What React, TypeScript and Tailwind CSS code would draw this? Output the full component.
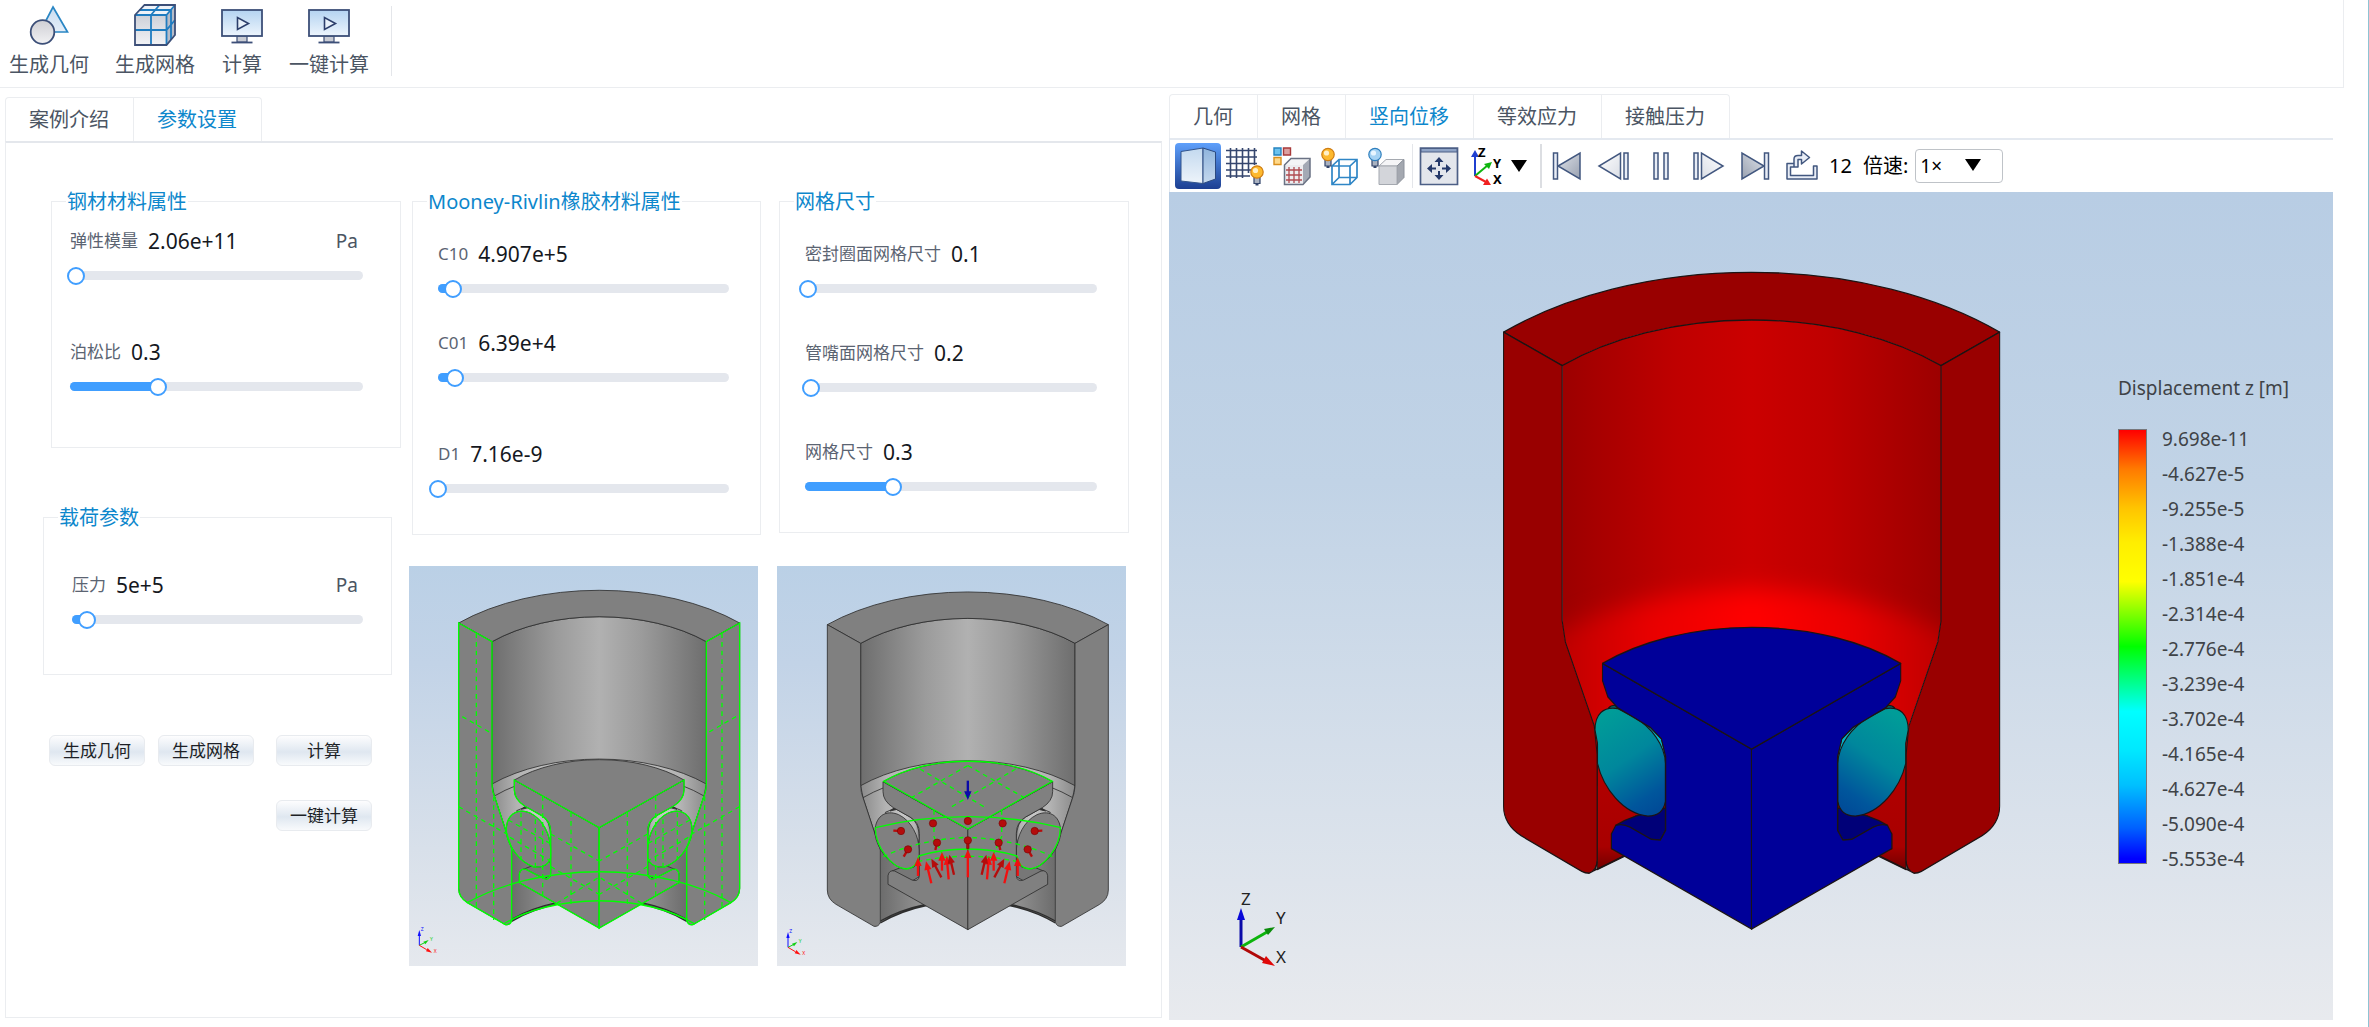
import { useId, useState } from "react";
import type { ReactNode } from "react";

const NAVY = "#3c4f78";
const GREEN = "#00ff00";

/* ---------- ribbon icons ---------- */

function ShapesIcon() {
  return (
    <svg width="42" height="42" viewBox="0 0 42 42" aria-hidden="true">
      <defs>
        <linearGradient id="shTri" x1="0" y1="0" x2="0" y2="1">
          <stop offset="0" stopColor="#c9dcf0" />
          <stop offset="1" stopColor="#e4eef9" />
        </linearGradient>
        <linearGradient id="shCir" x1="0" y1="0" x2="0" y2="1">
          <stop offset="0" stopColor="#cfcfd4" />
          <stop offset="1" stopColor="#f1f1f3" />
        </linearGradient>
      </defs>
      <path d="M25 3L39.500 28H12Z" fill="url(#shTri)" stroke="#2a86c4" strokeWidth="1.700" />
      <circle cx="14.500" cy="28" r="11.800" fill="url(#shCir)" stroke={NAVY} strokeWidth="1.800" />
    </svg>
  );
}

function MeshCubeIcon() {
  return (
    <svg width="42" height="42" viewBox="0 0 42 42" aria-hidden="true">
      <defs>
        <linearGradient id="mcF" x1="0" y1="0" x2="0" y2="1">
          <stop offset="0" stopColor="#cdd0d8" />
          <stop offset="1" stopColor="#f2f3f6" />
        </linearGradient>
      </defs>
      <path d="M1 11L10.500 1H41L32.500 11Z" fill="#eef2f8" />
      <path d="M32.500 11L41 1V31L32.500 41Z" fill="#b7bcc8" />
      <path d="M1 11H32.500V41H1Z" fill="url(#mcF)" />
      <path d="M17 41V11L25.500 1M1 26H32.500L41 16M5.500 6H37V36M1 11H32.500M32.500 11V41M32.500 11L41 1" fill="none" stroke="#1f7cc0" strokeWidth="1.800" />
      <path d="M1 11L10.500 1H41V31L32.500 41H1Z" fill="none" stroke={NAVY} strokeWidth="1.800" />
    </svg>
  );
}

function MonitorIcon() {
  const id = useId();
  return (
    <svg width="42" height="42" viewBox="0 0 42 42" aria-hidden="true">
      <defs>
        <linearGradient id={id} x1="0" y1="0" x2="0" y2="1">
          <stop offset="0" stopColor="#b4d3f1" />
          <stop offset="1" stopColor="#edf5fd" />
        </linearGradient>
      </defs>
      <path d="M16 32H26V38H16Z" fill="#c9ccd4" stroke={NAVY} strokeWidth="1.200" />
      <path d="M10.500 38.500H31.500" stroke={NAVY} strokeWidth="1.800" />
      <rect x="1" y="6" width="40" height="26" fill={`url(#${id})`} stroke={NAVY} strokeWidth="1.800" />
      <path d="M16.500 13.500V25.500L27.500 19.500Z" fill="#e8f1fa" stroke="#2c3e6b" strokeWidth="1.600" />
    </svg>
  );
}

/* ---------- viewer toolbar icons ---------- */

function Bulb({ x, y, on }: { x: number; y: number; on: boolean }) {
  return (
    <g transform={`translate(${x} ${y})`}>
      <path d="M-3 5H3V11.500H-3Z" fill="#aab2c0" stroke="#33456b" strokeWidth="1.200" />
      <path d="M-1.500 11.500H1.500V13.500H-1.500Z" fill="#33456b" />
      <circle r="6.200" fill={on ? "#fdb92e" : "#a5d2f4"} stroke={on ? "#cf7d13" : "#2f7fbd"} strokeWidth="1.200" />
      <circle cx="-1.500" cy="-1.500" r="2.600" fill={on ? "#fff0c8" : "#e8f5ff"} />
    </g>
  );
}

function SolidViewIcon() {
  return (
    <svg width="40" height="40" viewBox="0 0 40 40" aria-hidden="true">
      <defs>
        <linearGradient id="svL" x1="0" y1="0" x2="0" y2="1">
          <stop offset="0" stopColor="#c3d9ef" />
          <stop offset="1" stopColor="#eef4fa" />
        </linearGradient>
        <linearGradient id="svR" x1="0" y1="0" x2="0" y2="1">
          <stop offset="0" stopColor="#8fb4dc" />
          <stop offset="1" stopColor="#c5d9ee" />
        </linearGradient>
      </defs>
      <path d="M3 5.500L25 2V37.500L3 35Z" fill="url(#svL)" stroke="#33558c" />
      <path d="M25 2L37.500 6V33L25 37.500Z" fill="url(#svR)" stroke="#2c4a80" />
    </svg>
  );
}

function GridBulbIcon() {
  return (
    <svg width="40" height="40" viewBox="0 0 40 40" aria-hidden="true">
      <path d="M5.500 2V32M11.500 2V32M17.500 2V32M23.500 2V27M29.500 2V19M1 4.500H32M1 11H32M1 17.500H32M1 24H26M1 30H25" fill="none" stroke="#35466e" strokeWidth="1.600" />
      <Bulb x={32} y={26} on />
    </svg>
  );
}

function SelectionMeshIcon() {
  return (
    <svg width="40" height="40" viewBox="0 0 40 40" aria-hidden="true">
      <path d="M2 2H9V9H2Z" fill="#6cc2ee" stroke="#2484c0" strokeWidth="1.400" />
      <path d="M11.500 2H18.500V9H11.500Z" fill="#dca0a0" stroke="#a83a3a" strokeWidth="1.400" />
      <path d="M2 11.500H9V18.500H2Z" fill="#ffd98a" stroke="#d98f1e" strokeWidth="1.400" />
      <path d="M12.500 19L19 12.500H38L31 19Z" fill="#f3f4f6" />
      <path d="M31 19L38 12.500V31L31 38.500Z" fill="#a3a9b5" />
      <path d="M12.500 19H31V38.500H12.500Z" fill="#ececef" />
      <path d="M12.500 38.500V19L19 12.500H38V31L31 38.500Z" fill="none" stroke="#6a7284" strokeWidth="1.500" />
      <path d="M14 24H30M14 29H30M14 34H30M17 21V37M22 21V37M27 21V37" stroke="#b04a50" strokeWidth="1.300" />
    </svg>
  );
}

function WireBulbIcon() {
  return (
    <svg width="40" height="40" viewBox="0 0 40 40" aria-hidden="true">
      <path d="M13 20L20 13.500H38V31.500L31 38.500H13ZM13 20H31V38.500M31 20L38 13.500M20 13.500V31.500M20 31.500H38M20 31.500L13 38.500" fill="none" stroke="#2f86c6" strokeWidth="1.700" />
      <Bulb x={9} y={8.500} on />
    </svg>
  );
}

function TransparentBulbIcon() {
  return (
    <svg width="40" height="40" viewBox="0 0 40 40" aria-hidden="true">
      <path d="M13 20L20 13.500H38L31 20Z" fill="#f5f5f7" stroke="#a5a9b0" />
      <path d="M31 20L38 13.500V31.500L31 38.500Z" fill="#a4a8b0" stroke="#8d929c" />
      <path d="M13 20H31V38.500H13Z" fill="#d3d5da" stroke="#a5a9b0" />
      <Bulb x={9} y={8.500} on={false} />
    </svg>
  );
}

function FitIcon() {
  return (
    <svg width="40" height="40" viewBox="0 0 40 40" aria-hidden="true">
      <path d="M1.500 2H38.500V38.500H1.500Z" fill="#e3e6ec" stroke="#4c5f86" strokeWidth="1.700" />
      <path d="M2 2.500H38V6H2Z" fill="#8ea3c6" stroke="#4c5f86" />
      <path d="M20 11L24.500 16H21V20H19V16H15.500ZM20 34L24.500 29H21V25H19V29H15.500ZM8 22.500L13 18V21.500H17V23.500H13V27ZM32 22.500L27 18V21.500H23V23.500H27V27Z" fill="#25396a" />
    </svg>
  );
}

function AxesIcon() {
  return (
    <svg width="34" height="46" viewBox="0 -3 34 46" aria-hidden="true" fontFamily="Noto Sans, sans-serif" fontSize="13" fontWeight="700">
      <path d="M4 30V9" stroke="#1f3fd0" strokeWidth="2" />
      <path d="M4 4L8 11H0Z" fill="#1f3fd0" />
      <path d="M4 30L17 19" stroke="#0eb50e" strokeWidth="2" />
      <path d="M21 16L18 23L13 18Z" fill="#0eb50e" />
      <path d="M4 30L15 36" stroke="#f02020" strokeWidth="2" />
      <path d="M20 39L12 39L16 32.500Z" fill="#f02020" />
      <text x="7" y="11">Z</text>
      <text x="22" y="22">Y</text>
      <text x="22" y="38">X</text>
    </svg>
  );
}

function Caret() {
  return (
    <svg width="16" height="12" viewBox="0 0 16 12" aria-hidden="true">
      <path d="M0 0H16L8 12Z" fill="#000" />
    </svg>
  );
}

type MediaKind = "first" | "prev" | "pause" | "next" | "last" | "export";

function MediaIcon({ kind }: { kind: MediaKind }) {
  const mirrored = kind === "next" || kind === "last";
  return (
    <svg width="36" height="36" viewBox="0 0 36 36" aria-hidden="true">
      <defs>
        <linearGradient id={`md-${kind}`} x1="0" y1="0" x2="1" y2="1">
          <stop offset="0" stopColor={kind === "prev" || kind === "next" ? "#ffffff" : "#dfe3ea"} />
          <stop offset="1" stopColor={kind === "prev" || kind === "next" ? "#d9dde5" : "#99a1b0"} />
        </linearGradient>
      </defs>
      <g transform={mirrored ? "translate(36 0) scale(-1 1)" : undefined} stroke="#42577f" strokeWidth="1.500">
        {(kind === "first" || kind === "last") && (
          <>
            <path d="M31 5V31L9 18Z" fill={`url(#md-${kind})`} />
            <path d="M4.500 5H8.500V31H4.500Z" fill="#e8edf6" />
          </>
        )}
        {(kind === "prev" || kind === "next") && (
          <>
            <path d="M24.500 5V31L3 18Z" fill={`url(#md-${kind})`} />
            <path d="M28 5H32V31H28Z" fill="#e8edf6" />
          </>
        )}
        {kind === "pause" && (
          <>
            <path d="M11 5H15V31H11Z" fill="#e8edf6" />
            <path d="M21 5H25V31H21Z" fill="#e8edf6" />
          </>
        )}
        {kind === "export" && (
          <path
            d="M10 15.500H3V31H33V18H29.500V27.500H6.500V19H10V11Q10 7.500 14 7.500H17.500V3L25.500 9.500L17.500 16V11.500H14V19H10"
            fill="#e8edf6"
            strokeLinejoin="round"
          />
        )}
      </g>
    </svg>
  );
}

/* ---------- 3D drawings ---------- */

function Triad() {
  return (
    <svg width="70" height="90" viewBox="0 0 70 90" role="img" aria-label="坐标轴" fontFamily="Noto Sans, sans-serif" fontSize="17" fill="#222">
      <path d="M8 60V28" stroke="#0a0aa8" strokeWidth="3" />
      <path d="M8 21L12 33H4Z" fill="#0808d8" />
      <path d="M8 60L34 45" stroke="#0cb40c" strokeWidth="3" />
      <path d="M42 40L35 48L31 42Z" fill="#0a8c0a" />
      <path d="M8 60L33 74" stroke="#b00808" strokeWidth="3" />
      <path d="M42 79L29 76L33 69Z" fill="#e00808" />
      <text x="8" y="18">Z</text>
      <text x="43" y="37">Y</text>
      <text x="43" y="76">X</text>
    </svg>
  );
}

function ResultHalf() {
  return (
    <g>
      <path d="M328 1130V1388L420 1352L368 1341V1308L436 1268L519 1250V1130Z" fill="url(#rmLow)" />
      <path d="M360 1026Q366 1020 378 1020L400 1036Z" fill="#006c70" />
      <path d="M440 1050L478 1070L508 1095L520 1135V1180Z" fill="#05b2c6" />
      <path d="M380 1289Q405 1276 436 1268L519 1250V1300L505 1322H480L420 1294Z" fill="#000078" />
      <path d="M66 184L230 259V830L239 878L320 1066L328 1130V1365Q328 1388 306 1396Q294 1396 285 1392L115 1312Q66 1286 66 1246Z" fill="#990000" />
      <path d="M322 1075C322 1040 345 1022 385 1027L430 1046C480 1068 518 1110 519 1150V1235Q512 1268 470 1268C400 1262 345 1205 329 1150V1105Z" fill="url(#rmRing)" />
      <path d="M343 926L761 1118V1521L368 1341V1308L380 1289Q400 1284 420 1293L480 1320L505 1322L520 1300V1135L508 1095L478 1070L385 1025L358 1001L343 965Z" fill="#000099" />
      <path d="M328 1370Q326 1386 318 1391L400 1358" fill="none" />
    </g>
  );
}

function ResultModel() {
  return (
    <svg className="h-auto w-full" viewBox="-9 0 560 700" role="img" aria-label="竖向位移云图">
      <defs>
        <linearGradient id="rmWall">
          <stop offset="0" stopColor="#9c0000" />
          <stop offset="0.3" stopColor="#bf0000" />
          <stop offset="0.5" stopColor="#cb0000" />
          <stop offset="0.7" stopColor="#bf0000" />
          <stop offset="1" stopColor="#9c0000" />
        </linearGradient>
        <linearGradient id="rmCone">
          <stop offset="0" stopColor="#b80000" />
          <stop offset="0.25" stopColor="#e80000" />
          <stop offset="0.5" stopColor="#ff0000" />
          <stop offset="0.75" stopColor="#e80000" />
          <stop offset="1" stopColor="#b80000" />
        </linearGradient>
        <linearGradient id="rmLow" x1="0" y1="0" x2="0" y2="1">
          <stop offset="0" stopColor="#b40000" />
          <stop offset="0.8" stopColor="#a80000" />
          <stop offset="1" stopColor="#700000" />
        </linearGradient>
        <linearGradient id="rmRing" x1="0.3" y1="0" x2="0.75" y2="1">
          <stop offset="0" stopColor="#009c98" />
          <stop offset="0.45" stopColor="#00879c" />
          <stop offset="0.85" stopColor="#00569c" />
          <stop offset="1" stopColor="#004c98" />
        </linearGradient>
        <filter id="rmSoft" x="-20%" y="-20%" width="140%" height="140%">
          <feGaussianBlur stdDeviation="26" />
        </filter>
        <clipPath id="rmClip">
          <path d="M230 259A750 349 0 0 1 1291 259V830L1281 878L1198 1070V1200H322V1070L239 878L230 830Z" />
        </clipPath>
      </defs>
      <g transform="scale(0.357143 0.446429)" stroke="#1c1414" strokeWidth="3" strokeLinejoin="round">
        <g clipPath="url(#rmClip)" stroke="none">
          <path d="M230 150H1291V1200H230Z" fill="url(#rmWall)" />
          <path d="M190 870A800 372 0 0 1 1331 870V1260H190Z" fill="url(#rmCone)" filter="url(#rmSoft)" />
        </g>
        <path d="M66 184A982 457 0 0 1 1455 184L1291 259A750 349 0 0 0 230 259Z" fill="#990000" />
        <ResultHalf />
        <g transform="translate(1521 0) scale(-1 1)">
          <ResultHalf />
        </g>
        <path d="M343 926A590 275 0 0 1 1178 926L760.500 1118Z" fill="#000099" />
      </g>
    </svg>
  );
}

const SECTION = "M176 189L276 245V672Q277 695 283 708L335 865V1082Q330 1096 316 1094L202 1028Q176 1012 176 985Z";
const PLUNGER = "M343 660L597.500 803V1104L358 968V942Q361 924 378 928L430 955Q450 962 452 942V815Q452 782 424 766L374 738Q343 718 343 690Z";
const RING = "M319 818C316 765 350 742 390 759C430 778 450 825 452 865V893Q444 925 402 921C360 908 325 860 319 818Z";

function GreyHalf() {
  return (
    <g>
      <path d="M335 865V1084A371 214 0 0 1 480 1030L520 1000V860Z" fill="url(#gmLow)" stroke="none" />
      <path d="M335 1078A371 214 0 0 1 470 1028M335 1084A371 214 0 0 1 480 1030" fill="none" strokeWidth="4" />
      <path d="M350 752L378 740L424 766Q452 782 452 830L440 880Z" fill="url(#gmCone)" />
      <path d="M364 748L390 742L378 738Z" fill="#333" />
      <path d="M370 928L400 916L452 905V945L430 958Z" fill="#777" />
      <path d={SECTION} fill="#808080" />
      <path d={RING} fill="#808080" />
      <path d={PLUNGER} fill="#808080" />
    </g>
  );
}

function GreyModel() {
  return (
    <g stroke="#2e2e2e" strokeWidth="2.500" strokeLinejoin="round">
      <defs>
        <linearGradient id="gmWall">
          <stop offset="0" stopColor="#6e6e6e" />
          <stop offset="0.3" stopColor="#9b9b9b" />
          <stop offset="0.5" stopColor="#b1b1b1" />
          <stop offset="0.7" stopColor="#9b9b9b" />
          <stop offset="1" stopColor="#6e6e6e" />
        </linearGradient>
        <linearGradient id="gmCone">
          <stop offset="0" stopColor="#8a8a8a" />
          <stop offset="0.12" stopColor="#b4b4b4" />
          <stop offset="0.5" stopColor="#c8c8c8" />
          <stop offset="0.88" stopColor="#b4b4b4" />
          <stop offset="1" stopColor="#8a8a8a" />
        </linearGradient>
        <linearGradient id="gmLow">
          <stop offset="0" stopColor="#6c6c6c" />
          <stop offset="1" stopColor="#a6a6a6" />
        </linearGradient>
      </defs>
      <path d="M276 245A455 256 0 0 1 919 245V672H276Z" fill="url(#gmWall)" />
      <path d="M276 672A455 256 0 0 1 919 672L912 708L875 820H320L283 708Z" fill="url(#gmCone)" />
      <path d="M283 708A440 250 0 0 1 912 708" fill="none" />
      <path d="M176 189A596 335 0 0 1 1019 189L919 245A455 256 0 0 0 276 245Z" fill="#808080" />
      <GreyHalf />
      <g transform="translate(1195 0) scale(-1 1)">
        <GreyHalf />
      </g>
      <path d="M343 660A359 207 0 0 1 852 660L597.500 803Z" fill="#808080" />
    </g>
  );
}

function GeometryHalfLines() {
  return (
    <g>
      <path d={SECTION} />
      <path d={RING} />
      <path d={PLUNGER} />
      <path
        d="M229 220V1045M281 710V1080M187 470L275 520M176 740L320 822M363 758V900M406 778V920M325 780L450 850M330 832L450 902M428 708V1008M513 757V1035M452 822L597 903M452 920L597 1003M470 1030L600 950"
        strokeDasharray="14 12"
      />
    </g>
  );
}

function MiniTriad({ x, y }: { x: number; y: number }) {
  return (
    <g transform={`translate(${x} ${y})`} strokeWidth="3" fontFamily="Noto Sans, sans-serif" fontSize="15">
      <path d="M0 0V-32" stroke="#1010ff" />
      <path d="M0 -46L5 -28H-5Z" fill="#1010ff" />
      <path d="M0 0L16 -8" stroke="#10d010" />
      <path d="M28 -16L18 -3L12 -11Z" fill="#10d010" />
      <path d="M0 0L22 13" stroke="#ff1010" />
      <path d="M38 22L20 18L25 8Z" fill="#ff1010" />
      <text x="4" y="-42" fill="#1010ff">Z</text>
      <text x="32" y="-14" fill="#10d010">Y</text>
      <text x="43" y="24" fill="#ff1010">X</text>
    </g>
  );
}

function ThumbSky() {
  return (
    <>
      <defs>
        <linearGradient id="thSky" x1="0" y1="0" x2="0" y2="1">
          <stop offset="0" stopColor="#bad0e6" />
          <stop offset="0.25" stopColor="#c2d3e7" />
          <stop offset="0.7" stopColor="#d8e0ea" />
          <stop offset="1" stopColor="#e6e9ee" />
        </linearGradient>
      </defs>
      <path d="M0 0H1100V1240H0Z" fill="url(#thSky)" />
    </>
  );
}

function GeometryThumb() {
  return (
    <svg className="h-auto w-full" viewBox="27 18 1047 1200" role="img" aria-label="几何示意图">
      <ThumbSky />
      <GreyModel />
      <g fill="none" stroke={GREEN} strokeWidth="4">
        <GeometryHalfLines />
        <g transform="translate(1195 0) scale(-1 1)">
          <GeometryHalfLines />
        </g>
        <path d="M202 1028A560 318 0 0 1 993 1028M310 1092A407 239 0 0 1 885 1092" />
      </g>
      <MiniTriad x={58} y={1156} />
    </svg>
  );
}

const PRESSURE_ARROWS: [number, number, number, number][] = [
  [444, 948, 444, 892],
  [484, 970, 468, 904],
  [514, 952, 484, 896],
  [516, 932, 516, 876],
  [536, 958, 530, 888],
  [552, 944, 538, 884],
];
const PRESSURE_DOTS: [number, number, number, number][] = [
  [393, 813, 370, 812],
  [414, 868, 401, 890],
  [489, 790, 480, 790],
  [501, 848, 496, 870],
];

function PressureHalf() {
  return (
    <g stroke="#b40c0c" fill="#b40c0c" strokeWidth="7">
      {PRESSURE_DOTS.map(([cx, cy, x, y]) => (
        <g key={`${cx}-${cy}`}>
          <path d={`M${cx} ${cy}L${x} ${y}`} />
          <circle cx={cx} cy={cy} r="11" stroke="#7a0606" strokeWidth="2" />
        </g>
      ))}
      {PRESSURE_ARROWS.map(([x1, y1, x2, y2], i) => (
        <Arrow key={i} x1={x1} y1={y1} x2={x2} y2={y2} color={i % 3 === 2 ? "#b40c0c" : "#f01010"} />
      ))}
    </g>
  );
}

function Arrow({ x1, y1, x2, y2, color }: { x1: number; y1: number; x2: number; y2: number; color: string }) {
  const angle = (Math.atan2(y2 - y1, x2 - x1) * 180) / Math.PI;
  const length = Math.hypot(x2 - x1, y2 - y1);
  return (
    <g transform={`translate(${x1} ${y1}) rotate(${angle})`}>
      <path d={`M0 0H${length - 20}`} stroke={color} strokeWidth="7" />
      <path d={`M${length} 0L${length - 26} 11V-11Z`} fill={color} stroke="none" />
    </g>
  );
}

function LoadHalfLines() {
  return (
    <g>
      <path d="M316 803C316 860 365 925 408 927Q440 925 446 888" />
      <path
        d="M450 627L650 745M593 617L426 712M492 750V830L520 890M340 890A420 230 0 0 1 593 832"
        strokeDasharray="14 12"
      />
    </g>
  );
}

function LoadThumb() {
  return (
    <svg className="h-auto w-full" viewBox="21 18 1047 1200" role="img" aria-label="载荷示意图">
      <ThumbSky />
      <g transform="translate(-4 5)">
        <GreyModel />
      </g>
      <g fill="none" stroke={GREEN} strokeWidth="4">
        <LoadHalfLines />
        <g transform="translate(1187 0) scale(-1 1)">
          <LoadHalfLines />
        </g>
        <path d="M341 664A359 207 0 0 1 847 664L593.500 807ZM316 803A640 330 0 0 1 873 803M446 888A280 140 0 0 1 741 888" />
        <path d="M444 905A350 170 0 0 1 743 905" strokeDasharray="14 12" />
      </g>
      <PressureHalf />
      <g transform="translate(1187 0) scale(-1 1)">
        <PressureHalf />
      </g>
      <g fill="#b40c0c" stroke="#7a0606" strokeWidth="2">
        <circle cx="593.500" cy="783" r="11" />
        <path d="M590 842H597V866H590Z" />
        <circle cx="593.500" cy="841" r="11" />
      </g>
      <Arrow x1={593.500} y1={952} x2={593.500} y2={868} color="#f01010" />
      <Arrow x1={593.500} y1={662} x2={593.500} y2={720} color="#0a0aa8" />
      <MiniTriad x={54} y={1162} />
    </svg>
  );
}

/* ---------- form parts ---------- */

type FieldProps = { label: string; value: string; unit?: string; percent: number };

function SliderField({ label, value, unit, percent }: FieldProps) {
  const id = useId();
  const [pos, setPos] = useState(percent);
  return (
    <div>
      <div className="flex h-7 items-center leading-7">
        <label htmlFor={id} className="text-[17px] text-[#5b6472]">{label}</label>
        <output htmlFor={id} className="ml-2.5 text-[21px] text-[#15181e]">{value}</output>
        {unit && <span className="mr-[5px] ml-auto text-[19px] text-[#4b5563]">{unit}</span>}
      </div>
      <div className="relative mt-4 h-[9px] rounded-full bg-[#e4e7ed]">
        <div className="h-full rounded-full bg-[#409eff]" style={{ width: `${pos}%` }} />
        <input
          id={id}
          type="range"
          min={0}
          max={100}
          value={pos}
          onChange={(e) => setPos(Number(e.target.value))}
          className="absolute -top-1 -left-[9px] h-[18px] w-[calc(100%+18px)] cursor-pointer appearance-none bg-transparent [&::-webkit-slider-thumb]:h-[18px] [&::-webkit-slider-thumb]:w-[18px] [&::-webkit-slider-thumb]:appearance-none [&::-webkit-slider-thumb]:rounded-full [&::-webkit-slider-thumb]:border-2 [&::-webkit-slider-thumb]:border-[#409eff] [&::-webkit-slider-thumb]:bg-white"
        />
      </div>
    </div>
  );
}

function Group({ title, className, children }: { title: string; className: string; children: ReactNode }) {
  return (
    <fieldset className={`min-w-0 border border-[#ebedf0] pr-4 pl-[14px] ${className}`}>
      <legend className="px-px pt-px text-[20px] leading-[27px] whitespace-nowrap text-[#0d87cc]">{title}</legend>
      {children}
    </fieldset>
  );
}

function ActionButton({ children }: { children: ReactNode }) {
  return (
    <button
      type="button"
      className="h-[31px] w-24 rounded-md border border-[#e8ebef] bg-linear-to-b from-[#fdfdfe] via-[#dfe7f0] via-55% to-[#f8fafc] text-[17px] leading-7 whitespace-nowrap text-[#1c1f26]"
    >
      {children}
    </button>
  );
}

function RibbonButton({ icon, children }: { icon: ReactNode; children: ReactNode }) {
  return (
    <button type="button" className="flex flex-col items-center gap-[5px] pt-1 text-[20px] leading-7 text-[#4b5563]">
      {icon}
      {children}
    </button>
  );
}

function Tabs({ labels, active }: { labels: string[]; active: number }) {
  return (
    <div role="tablist" className="flex w-fit rounded-t border border-b-0 border-[#ebedf0]">
      {labels.map((label, i) => (
        <button
          key={label}
          type="button"
          role="tab"
          aria-selected={i === active}
          className={`h-[43px] pt-px pr-6 pl-[23px] text-[20px] leading-7 ${i > 0 ? "border-l border-[#ebedf0]" : ""} ${i === active ? "text-[#0d87cc]" : "text-[#4b5563]"}`}
        >
          {label}
        </button>
      ))}
    </div>
  );
}

function ToolButton({ label, selected, children }: { label: string; selected?: boolean; children: ReactNode }) {
  return (
    <button
      type="button"
      aria-label={label}
      className={`flex h-[46px] w-[46px] shrink-0 items-center justify-center ${selected ? "rounded-sm bg-linear-to-b from-[#5fa0fb] to-[#1d3f92]" : ""}`}
    >
      {children}
    </button>
  );
}

const MEDIA: { kind: MediaKind; label: string }[] = [
  { kind: "first", label: "第一帧" },
  { kind: "prev", label: "上一帧" },
  { kind: "pause", label: "暂停" },
  { kind: "next", label: "下一帧" },
  { kind: "last", label: "最后一帧" },
  { kind: "export", label: "导出" },
];

const LEGEND = [
  "9.698e-11",
  "-4.627e-5",
  "-9.255e-5",
  "-1.388e-4",
  "-1.851e-4",
  "-2.314e-4",
  "-2.776e-4",
  "-3.239e-4",
  "-3.702e-4",
  "-4.165e-4",
  "-4.627e-4",
  "-5.090e-4",
  "-5.553e-4",
];

function ParameterPanel() {
  return (
    <section className="flex min-w-0 flex-col pt-[9px] pb-[9px]">
      <Tabs labels={["案例介绍", "参数设置"]} active={1} />
      <div className="grid grow grid-cols-[366fr_368fr_352fr] content-start border border-t-2 border-[#ebedf0] border-t-[#e4e7ec] pt-11 pr-8 pl-[37px]">
        <div>
          <Group title="钢材材料属性" className="mr-2 ml-2 pt-3 pb-14">
            <div className="flex flex-col gap-[58px] pr-[21px] pl-1">
              <SliderField label="弹性模量" value="2.06e+11" unit="Pa" percent={2} />
              <SliderField label="泊松比" value="0.3" percent={30} />
            </div>
          </Group>
          <Group title="载荷参数" className="mt-[55px] mr-[17px] pt-10 pb-[50px]">
            <div className="pr-3 pl-[14px]">
              <SliderField label="压力" value="5e+5" unit="Pa" percent={5} />
            </div>
          </Group>
          <div className="mt-[60px] grid w-fit grid-cols-[109px_118px_96px] gap-y-[34px] pl-[6px]">
            <ActionButton>生成几何</ActionButton>
            <ActionButton>生成网格</ActionButton>
            <ActionButton>计算</ActionButton>
            <div className="col-start-3">
              <ActionButton>一键计算</ActionButton>
            </div>
          </div>
        </div>
        <div>
          <Group title="Mooney-Rivlin橡胶材料属性" className="mr-4 ml-[3px] pt-[25px] pb-[41px]">
            <div className="flex flex-col pr-[15px] pl-[11px]">
              <SliderField label="C10" value="4.907e+5" percent={5} />
              <div className="mt-9 mb-[58px]">
                <SliderField label="C01" value="6.39e+4" percent={6} />
              </div>
              <SliderField label="D1" value="7.16e-9" percent={0} />
            </div>
          </Group>
          <div className="mt-[31px] mr-[19px]">
            <GeometryThumb />
          </div>
        </div>
        <div>
          <Group title="网格尺寸" className="ml-[2px] pt-[25px] pb-[41px]">
            <div className="flex flex-col gap-[46px] pr-[15px] pl-[11px]">
              <SliderField label="密封圈面网格尺寸" value="0.1" percent={1} />
              <SliderField label="管嘴面网格尺寸" value="0.2" percent={2} />
              <SliderField label="网格尺寸" value="0.3" percent={30} />
            </div>
          </Group>
          <div className="mt-[33px] mr-[3px]">
            <LoadThumb />
          </div>
        </div>
      </div>
    </section>
  );
}

function ResultPanel() {
  return (
    <section className="flex min-w-0 flex-col pt-[6px] pb-[7px]">
      <Tabs labels={["几何", "网格", "竖向位移", "等效应力", "接触压力"]} active={2} />
      <div className="flex h-[54px] items-center gap-px border-t-2 border-l border-[#e4e9f0] pl-[5px]">
        <ToolButton label="着色" selected><SolidViewIcon /></ToolButton>
        <ToolButton label="网格线"><GridBulbIcon /></ToolButton>
        <ToolButton label="选择面"><SelectionMeshIcon /></ToolButton>
        <ToolButton label="线框"><WireBulbIcon /></ToolButton>
        <ToolButton label="透明"><TransparentBulbIcon /></ToolButton>
        <div className="mx-[2px] h-11 w-px bg-[#e4e6ea]" />
        <ToolButton label="适应窗口"><FitIcon /></ToolButton>
        <button type="button" aria-label="视角" className="ml-2 flex h-[46px] w-[68px] items-center gap-1.5">
          <AxesIcon />
          <Caret />
        </button>
        <div className="mr-px h-11 w-[2px] bg-[#dcdee2]" />
        {MEDIA.map(({ kind, label }) => (
          <ToolButton key={kind} label={label}><MediaIcon kind={kind} /></ToolButton>
        ))}
        <span className="ml-[3px] text-[20px] leading-7 text-black">12</span>
        <label htmlFor="speed" className="ml-[10px] text-[20px] leading-7 whitespace-nowrap text-black">倍速:</label>
        <div className="relative ml-[6px]">
          <select id="speed" className="h-[34px] w-[88px] appearance-none rounded-sm border border-[#bfc3c8] bg-white pl-1 text-[19px] leading-7 text-black">
            <option>1×</option>
          </select>
          <span className="pointer-events-none absolute top-[10px] right-[22px]"><Caret /></span>
        </div>
      </div>
      <div className="grid grow grid-cols-[302fr_560fr_302fr] bg-linear-to-b from-[#b8cde4] via-[#c1d3e6] via-35% to-[#e8eaee]">
        <div className="self-end pb-[43px] pl-16">
          <Triad />
        </div>
        <div className="pt-[58px]">
          <ResultModel />
        </div>
        <div className="pt-[182px] pl-[87px] text-[19px] text-[#3f4347]">
          <div className="leading-7">Displacement z [m]</div>
          <div className="mt-[18px] flex">
            <div className="mt-[9px] h-[435px] w-[29px] border border-[#77777c] bg-[linear-gradient(to_bottom,#ff0000,#ff7a00_9%,#ffc400_18%,#ffee00_26%,#ffff00_35%,#00ff00_50%,#00ffff_65%,#00e8ff_74%,#00c0ff_82%,#0060ff_92%,#0000ff_99%)]" />
            <ol className="ml-[15px] pt-px">
              {LEGEND.map((v) => (
                <li key={v} className="h-[35px] leading-9">{v}</li>
              ))}
            </ol>
          </div>
        </div>
      </div>
    </section>
  );
}

export default function App() {
  return (
    <div className="flex min-h-screen flex-col border-r border-[#8fc3d3] bg-white font-['Noto_Sans','Noto_Sans_CJK_SC',sans-serif]">
      <header className="mr-6 flex h-[88px] gap-[26px] border-r border-b border-[#ebedf0] pl-[9px]">
        <RibbonButton icon={<ShapesIcon />}>生成几何</RibbonButton>
        <RibbonButton icon={<MeshCubeIcon />}>生成网格</RibbonButton>
        <RibbonButton icon={<MonitorIcon />}>计算</RibbonButton>
        <RibbonButton icon={<MonitorIcon />}>一键计算</RibbonButton>
        <div className="mt-[6px] -ml-[4px] h-[70px] w-px bg-[#e4e6ea]" />
      </header>
      <main className="grid grow grid-cols-[1157fr_1164fr] gap-[7px] pr-[35px] pl-[5px]">
        <ParameterPanel />
        <ResultPanel />
      </main>
    </div>
  );
}
